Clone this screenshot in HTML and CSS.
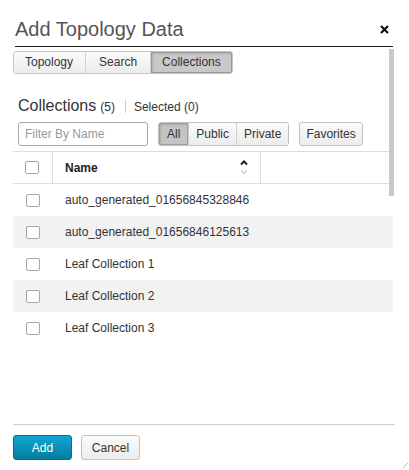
FILE: index.html
```html
<!DOCTYPE html>
<html>
<head>
<meta charset="utf-8">
<link rel="stylesheet" href="styles.css">
</head>
<body>
<div class="dialog">
  <div class="head">
    <h1 class="title">Add Topology Data</h1>
    <button class="close" aria-label="Close"><svg width="9" height="9" viewBox="0 0 9 9"><path d="M1 1L8 8M8 1L1 8" stroke="#111" stroke-width="2.2" stroke-linecap="butt"/></svg></button>
  </div>
  <div class="body">
    <div class="scroll-thumb"></div>
    <div class="tabs">
      <button class="tab">Topology</button>
      <button class="tab tab-search">Search</button>
      <button class="tab active">Collections</button>
    </div>
    <div class="coll-head">
      <span class="coll-title">Collections</span>
      <span class="count">(5)</span>
      <span class="sep"></span>
      <span class="selected">Selected (0)</span>
    </div>
    <div class="filters">
      <input class="filter" type="text" placeholder="Filter By Name">
      <div class="seg">
        <button class="seg-btn active">All</button>
        <button class="seg-btn">Public</button>
        <button class="seg-btn">Private</button>
      </div>
      <button class="btn fav">Favorites</button>
    </div>
    <div class="grid">
      <div class="grid-head">
        <div class="cell c-check"><input type="checkbox" class="cb"></div>
        <div class="cell c-name"><span class="th-label">Name</span>
          <svg class="sort" width="8" height="17" viewBox="0 0 8 17"><path d="M1 5.5L4 2.5L7 5.5" fill="none" stroke="#222" stroke-width="2"/><path d="M1 11.5L4 14.5L7 11.5" fill="none" stroke="#ccc" stroke-width="1.3"/></svg>
        </div>
        <div class="cell c-rest"></div>
      </div>
      <div class="grid-row"><div class="cell c-check"><input type="checkbox" class="cb"></div><div class="cell c-text">auto_generated_01656845328846</div></div>
      <div class="grid-row alt"><div class="cell c-check"><input type="checkbox" class="cb"></div><div class="cell c-text">auto_generated_01656846125613</div></div>
      <div class="grid-row"><div class="cell c-check"><input type="checkbox" class="cb"></div><div class="cell c-text">Leaf Collection 1</div></div>
      <div class="grid-row alt"><div class="cell c-check"><input type="checkbox" class="cb"></div><div class="cell c-text">Leaf Collection 2</div></div>
      <div class="grid-row"><div class="cell c-check"><input type="checkbox" class="cb"></div><div class="cell c-text">Leaf Collection 3</div></div>
    </div>
  </div>
  <div class="foot">
    <button class="btn primary">Add</button>
    <button class="btn cancel">Cancel</button>
  </div>
  <svg class="resize" width="5" height="5" viewBox="0 0 5 5"><path d="M0 5L5 0" stroke="#bbb" stroke-width="1"/></svg>
</div>
</body>
</html>
```

FILE: styles.css
```css
* { box-sizing: border-box; }
html, body { margin: 0; padding: 0; background: #fff; }
body {
  font-family: "Liberation Sans", Arial, sans-serif;
  font-size: 12px;
  color: #333;
}
button, input { font-family: inherit; font-size: 12px; color: #333; }

.dialog {
  position: relative;
  width: 409px;
  height: 470px;
  display: flex;
  flex-direction: column;
  background: #fff;
}

.head {
  margin: 0 16px 0 15px;
  padding: 17px 0 5px;
  border-bottom: 1px solid #222;
  display: flex;
  justify-content: space-between;
  align-items: flex-start;
}
.title {
  margin: 0;
  font-size: 20px;
  line-height: 24px;
  font-weight: normal;
  color: #555;
}
.close {
  margin: 8px 4px 0 0;
  padding: 0;
  border: 0;
  background: none;
  width: 9px;
  height: 9px;
  display: flex;
}

.body {
  position: relative;
  padding: 0 16px 0 13px;
  display: flex;
  flex-direction: column;
}
.scroll-thumb {
  position: absolute;
  left: 389px;
  top: 2px;
  width: 5px;
  height: 147px;
  background: #c8c8c8;
  z-index: 2;
}

.tabs {
  margin-top: 4px;
  display: flex;
  align-self: flex-start;
  border: 1px solid #c6c6c6;
  border-radius: 3px;
  overflow: hidden;
}
.tab {
  height: 21px;
  padding: 0 12px;
  border: 0;
  border-left: 1px solid #d2d2d2;
  background: linear-gradient(#fbfbfb, #ececec);
  line-height: 21px;
}
.tab:first-child { border-left: 0; padding: 0 12px 0 11px; }
.tab-search { padding: 0 13px; }
.tab.active {
  background: #c9c9c9;
  box-shadow: inset 0 0 0 1px #999, inset 1px 1px 3px rgba(0,0,0,0.25);
  padding: 0 11px;
}

.coll-head {
  margin: 23px 0 0 5px;
  display: flex;
  align-items: baseline;
  line-height: 18px;
}
.coll-title { font-size: 16px; color: #333; }
.count { margin-left: 4px; font-size: 12px; }
.sep {
  display: inline-block;
  width: 1px;
  height: 13px;
  background: #ccc;
  margin: 0 8px 0 10px;
  align-self: center;
}
.selected { font-size: 12px; }

.filters {
  margin: 6px 0 0 5px;
  display: flex;
  align-items: center;
}
.filter {
  width: 130px;
  height: 24px;
  border: 1px solid #aaa;
  border-radius: 3px;
  padding: 0 6px;
  outline: none;
}
.filter::placeholder { color: #999; }

.seg {
  margin-left: 10px;
  display: flex;
  border: 1px solid #c2c2c2;
  border-radius: 3px;
  overflow: hidden;
  height: 24px;
}
.seg-btn {
  height: 22px;
  padding: 0 7px;
  border: 0;
  border-left: 1px solid #d0d0d0;
  background: linear-gradient(#fbfbfb, #ececec);
}
.seg-btn:first-child { border-left: 0; padding: 0 8px; }
.seg-btn.active {
  background: #c4c4c4;
  box-shadow: inset 0 0 0 1px #9e9e9e, inset 1px 1px 3px rgba(0,0,0,0.25);
}

.btn {
  height: 24px;
  border: 1px solid #c2c2c2;
  border-radius: 3px;
  background: linear-gradient(#fbfbfb, #ececec);
  padding: 0 7px;
}
.fav { margin-left: 10px; padding: 0 6px; }

.grid {
  margin-top: 5px;
  display: flex;
  flex-direction: column;
}
.grid-head, .grid-row {
  display: grid;
  grid-template-columns: 40px 208px 1fr;
}
.grid-head {
  height: 33px;
  border-top: 1px solid #dcdcdc;
  border-bottom: 1px solid #dcdcdc;
}
.grid-row { height: 32px; }
.grid-row.alt { background: #f2f2f2; }
.cell { display: flex; align-items: center; }
.c-check { justify-content: center; padding-right: 1px; }
.grid-head .c-check, .grid-head .c-name { border-right: 1px solid #dcdcdc; }
.c-name {
  justify-content: space-between;
  padding: 0 12px 0 12px;
}
.th-label { font-weight: bold; color: #222; }
.sort { display: block; margin-top: 0; }
.c-text { padding-left: 12px; color: #333; }

.cb {
  appearance: none;
  -webkit-appearance: none;
  margin: 0;
  width: 14px;
  height: 13px;
  border: 1px solid #a6a6a6;
  border-radius: 2px;
  background: #fff;
}

.foot {
  margin: auto 14px 0 13px;
  padding: 10px 0 10px;
  border-top: 1px solid #cfcfcf;
  display: flex;
  gap: 9px;
}
.foot .btn { height: 25px; width: 59px; padding: 0; }
.primary {
  background: linear-gradient(#0ea7d1, #077c9f);
  border-color: #066d8c;
  color: #fff;
}
.cancel { color: #333; }

.resize {
  position: absolute;
  right: 1px;
  bottom: 2px;
}
```
